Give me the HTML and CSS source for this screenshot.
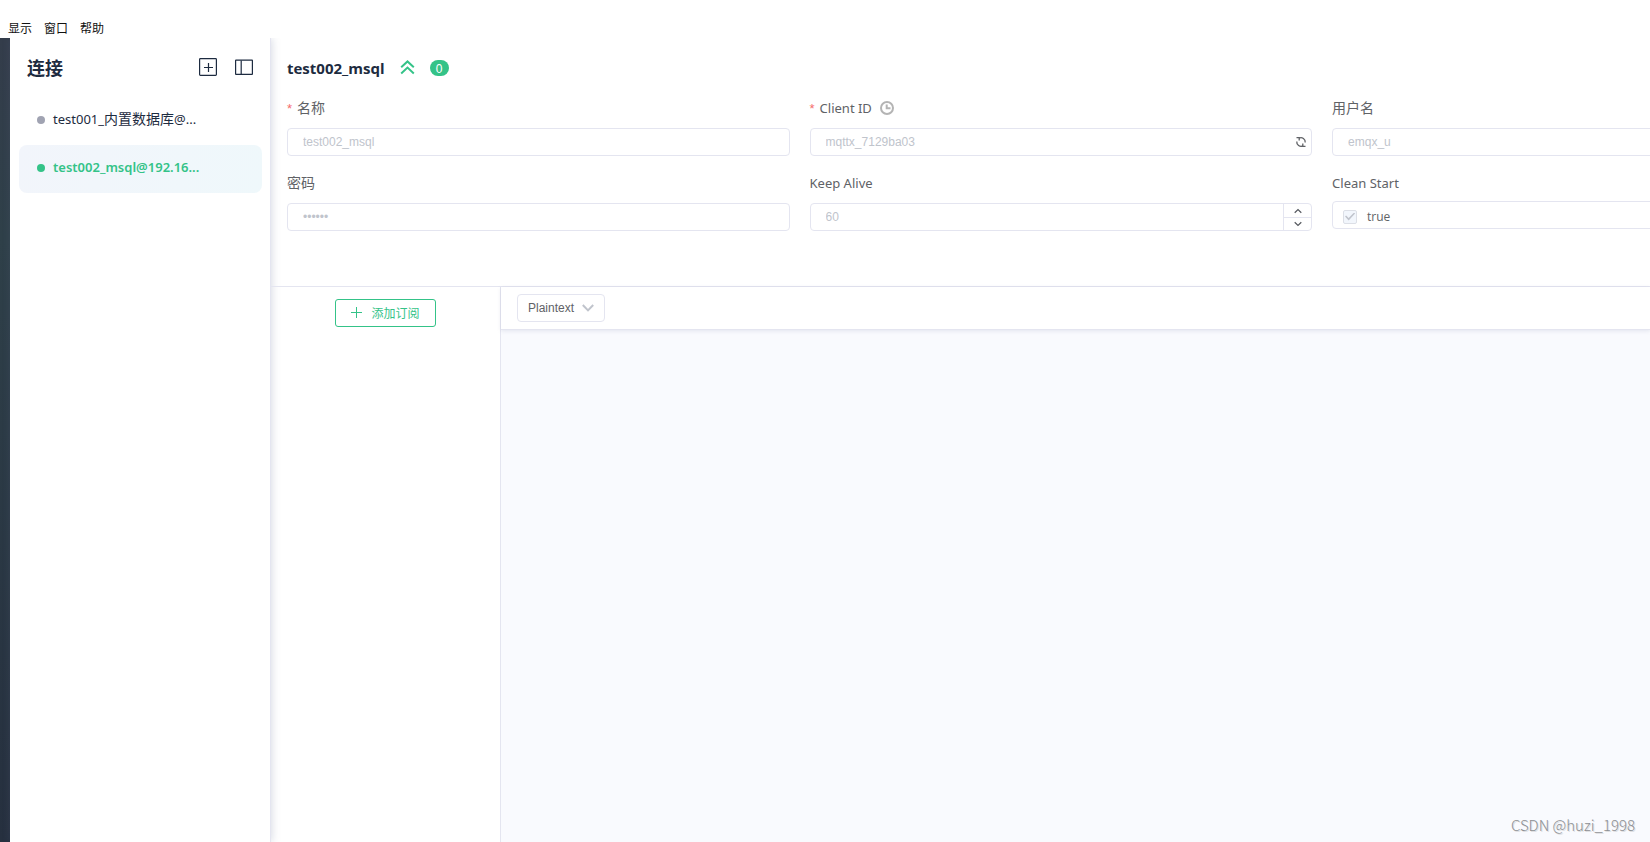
FILE: index.html
```html
<!DOCTYPE html>
<html lang="zh-CN">
<head>
<meta charset="utf-8">
<title>MQTTX</title>
<link rel="stylesheet" href="styles.css">
</head>
<body>
<nav class="menubar">
  <button type="button">显示</button>
  <button type="button">窗口</button>
  <button type="button">帮助</button>
</nav>
<div class="app">
  <div class="rail"></div>
  <aside class="sidebar">
    <header class="sidebar-head">
      <h1>连接</h1>
      <button type="button" class="icon-btn" aria-label="新建连接">
        <svg width="18" height="18" viewBox="0 0 18 18" fill="none" stroke="#1d2b40" stroke-width="1.200"><rect x=".6" y=".6" width="16.800" height="16.800" rx=".8"/><path d="M9.500 5v9M5 9.500h9"/></svg>
      </button>
      <button type="button" class="icon-btn" aria-label="收起列表">
        <svg width="18" height="18" viewBox="0 0 18 18" fill="none" stroke="#1d2b40" stroke-width="1.200"><rect x=".6" y="2.100" width="16.800" height="14.300" rx=".4"/><path d="M6.200 2.500v14"/></svg>
      </button>
    </header>
    <ul class="connections">
      <li><a href="#c1"><span class="dot"></span><span class="name">test001_<span class="zh">内置数据库</span>@...</span></a></li>
      <li><a href="#c2" class="active"><span class="dot"></span><span class="name">test002_msql@192.16...</span></a></li>
    </ul>
  </aside>
  <main class="main">
    <section class="info">
      <div class="title-row">
        <h2>test002_msql</h2>
        <button type="button" class="icon-btn" aria-label="收起">
          <svg width="15" height="16" viewBox="0 0 15 16" fill="none" stroke="#34c388" stroke-width="2"><path d="M1.200 7.200 7.500 1.400l6.300 5.800M1.200 13.400 7.500 7.600l6.300 5.800"/></svg>
        </button>
        <span class="badge">0</span>
      </div>
      <form class="fields">
        <div class="field">
          <label for="name"><span class="req">*</span><span class="zh">名称</span></label>
          <input id="name" class="box" type="text" value="test002_msql" disabled>
        </div>
        <div class="field">
          <label for="client"><span class="req">*</span>Client ID
            <svg width="14" height="14" viewBox="0 0 14 14" fill="none" stroke="#b4b4b4" stroke-width="2"><circle cx="7" cy="7" r="6"/><path d="M6.700 3.500v3.700h3.800"/></svg>
          </label>
          <div class="box group">
            <input id="client" type="text" value="mqttx_7129ba03" disabled>
            <button type="button" class="refresh" aria-label="刷新">
              <svg width="12" height="12" viewBox="0 0 12 12" fill="none" stroke="#606266" stroke-width="1.300"><path d="M4 2.100a4.300 4.300 0 0 1 6.200 4.400M8 9.900a4.300 4.300 0 0 1-6.200-4.400"/><path d="M1.500 1.700h2.700v2.700M10.500 10.300H7.800V7.600"/></svg>
            </button>
          </div>
        </div>
        <div class="field">
          <label for="user"><span class="zh">用户名</span></label>
          <input id="user" class="box" type="text" value="emqx_u" disabled>
        </div>
        <div class="field">
          <label for="pass"><span class="zh">密码</span></label>
          <input id="pass" class="box" type="password" value="public" disabled>
        </div>
        <div class="field">
          <label for="alive">Keep Alive</label>
          <div class="box group">
            <input id="alive" type="text" inputmode="numeric" value="60" disabled>
            <div class="stepper">
              <button type="button" aria-label="增加"><svg width="8" height="6" viewBox="0 0 8 6" fill="none" stroke="#55585e" stroke-width="1.200"><path d="M.7 4.700 4 1.500l3.300 3.200"/></svg></button>
              <button type="button" aria-label="减少"><svg width="8" height="6" viewBox="0 0 8 6" fill="none" stroke="#55585e" stroke-width="1.200"><path d="M.7 1.300 4 4.500l3.300-3.200"/></svg></button>
            </div>
          </div>
        </div>
        <div class="field raised">
          <label for="clean">Clean Start</label>
          <div class="box group check">
            <input id="clean" type="checkbox" checked disabled>
            <label for="clean">true</label>
          </div>
        </div>
      </form>
    </section>
    <div class="work">
      <section class="subs">
        <button type="button" class="add">
          <svg width="11" height="11" viewBox="0 0 11 11" stroke="#34c388"><path d="M5.500 0v11M0 5.500h11"/></svg>
          添加订阅
        </button>
      </section>
      <section class="messages">
        <div class="toolbar">
          <div class="select">
            <select aria-label="格式"><option>Plaintext</option><option>JSON</option><option>Hex</option></select>
            <svg width="12" height="8" viewBox="0 0 12 8" fill="none" stroke="#c0c4cc" stroke-width="2"><path d="m.8 1 5.200 5.400L11.200 1"/></svg>
          </div>
        </div>
        <div class="canvas"><span class="credit">CSDN @huzi_1998</span></div>
      </section>
    </div>
  </main>
</div>
</body>
</html>
```
FILE: styles.css
```css
:root {
  --green: #34c388;
  --line: #e4e5f0;
  --ink: #1d2b40;
  --ui: "Noto Sans", "Noto Sans CJK SC", sans-serif;
  --plain: "Liberation Sans", "Noto Sans CJK SC", sans-serif;
  --han: "Noto Sans CJK SC", sans-serif;
}
* { box-sizing: border-box; }
body {
  margin: 0;
  height: 100vh;
  display: flex;
  flex-direction: column;
  overflow: hidden;
  background: #fff;
  font-family: var(--ui);
}
button, input, select {
  margin: 0;
  padding: 0;
  border: 0;
  background: none;
  font: inherit;
  color: inherit;
}
svg { display: block; flex: none; }
h1, h2, ul { margin: 0; padding: 0; }
.zh { font-size: 14px; }
.menubar {
  display: flex;
  gap: 12px;
  padding: 18px 8px 0;
}
.menubar button {
  font-family: var(--han);
  font-size: 12px;
  line-height: 20px;
  color: #111;
}
.app { flex: 1; display: flex; min-height: 0; overflow: hidden; }
.rail { width: 10px; background: linear-gradient(#343d4b, #2f4049 25%, #26303f); }
.sidebar {
  width: 261px;
  border-right: 1px solid var(--line);
  box-shadow: 1px 0 8px rgba(100, 110, 150, .25);
}
.sidebar-head {
  display: flex;
  align-items: center;
  gap: 18px;
  padding: 16px 17px 17px;
}
.sidebar-head h1 {
  flex: 1;
  font-family: var(--han);
  font-size: 18px;
  line-height: 26px;
  color: var(--ink);
}
.connections { list-style: none; padding: 0 8px 0 9px; }
.connections a {
  display: flex;
  align-items: center;
  gap: 8px;
  height: 48px;
  padding: 0 18px 2px;
  border-radius: 8px;
  font-size: 13px;
  line-height: 18px;
  color: var(--ink);
  text-decoration: none;
}
.name { padding-bottom: 2px; }
.connections .active {
  background: linear-gradient(100deg, #f2f5fb, #eff8fb);
  color: var(--green);
  font-weight: 600;
}
.dot { width: 8px; height: 8px; border-radius: 50%; background: #a0a3b2; }
.active .dot { background: var(--green); }
.main { flex: 1; min-width: 0; display: flex; flex-direction: column; }
.info {
  height: 249px;
  padding: 16px 0 0 16px;
  border-bottom: 1px solid var(--line);
  overflow: hidden;
}
.title-row { display: flex; align-items: center; height: 28px; gap: 15px; }
.title-row h2 {
  font-family: "Open Sans", sans-serif;
  font-size: 15px;
  line-height: 28px;
  color: var(--ink);
}
.badge {
  width: 19px;
  height: 16px;
  border-radius: 8px;
  background: var(--green);
  color: #fff;
  font: 12px/18px var(--plain);
  text-align: center;
}
.fields {
  display: grid;
  grid-template-columns: repeat(3, 36.87%);
  gap: 17px 20px;
  padding-top: 16px;
}
.field > label {
  display: flex;
  align-items: center;
  height: 24px;
  margin-bottom: 6px;
  padding-bottom: 4px;
  font-size: 13px;
  line-height: 20px;
  color: #606266;
}
.field > label svg { margin-left: 8px; }
.req { margin-right: 5px; color: #f56c6c; font: 13px var(--plain); }
.box {
  display: block;
  width: 100%;
  height: 28px;
  padding: 0 15px;
  border: 1px solid var(--line);
  border-radius: 4px;
  background: #fff;
  font: 12px var(--plain);
  color: #c0c4cc;
}
.group { display: flex; align-items: center; padding-right: 0; overflow: hidden; }
.group > input[type="text"] { flex: 1; min-width: 0; }
.refresh { padding: 0 4px; }
.stepper {
  align-self: stretch;
  display: grid;
  grid-template-rows: 1fr 1fr;
  width: 28px;
  border-left: 1px solid var(--line);
}
.stepper button { display: grid; place-items: center; }
.stepper button + button { border-top: 1px solid var(--line); }
.raised > label { margin-bottom: 4px; }
.check { padding: 3px 0 0 10px; gap: 10px; }
.check label { font: 12px/18px "Open Sans", sans-serif; color: #606266; }
.check input {
  appearance: none;
  display: grid;
  place-items: center;
  width: 14px;
  height: 14px;
  border: 1px solid #dcdfe6;
  border-radius: 2px;
  background: #f2f6fc;
}
.check input:checked::before {
  content: "";
  width: 10px;
  height: 8px;
  background: #c0c4cc;
  clip-path: polygon(0 50%, 10% 38%, 36% 70%, 90% 0, 100% 12%, 36% 100%);
}
.work { flex: 1; display: flex; min-height: 0; }
.subs { width: 230px; padding-top: 12px; border-right: 1px solid var(--line); }
.add {
  display: flex;
  align-items: center;
  gap: 9px;
  height: 28px;
  margin: 0 auto;
  padding: 0 15px 2px;
  border: 1px solid var(--green);
  border-radius: 3px;
  color: var(--green);
  font-family: var(--han);
  font-size: 12px;
}
.messages { flex: 1; display: flex; flex-direction: column; }
.toolbar {
  height: 43px;
  padding: 7px 16px;
  border-bottom: 1px solid var(--line);
  box-shadow: 0 1px 4px rgba(100, 110, 150, .15);
  z-index: 1;
}
.select { display: grid; width: 88px; align-items: center; }
.select > * { grid-area: 1 / 1; }
.select select {
  appearance: none;
  height: 28px;
  padding: 0 10px;
  border: 1px solid var(--line);
  border-radius: 4px;
  font: 12px var(--plain);
  color: #606266;
}
.select svg { justify-self: end; margin-right: 11px; pointer-events: none; }
.canvas {
  flex: 1;
  display: flex;
  align-items: flex-end;
  justify-content: flex-end;
  padding: 7px 15px;
  background: #f9fafe;
}
.credit {
  font: 300 15px/20px var(--han);
  color: #8c8e92;
  text-shadow: 1px 1px 0 #dcdde0;
}
```
